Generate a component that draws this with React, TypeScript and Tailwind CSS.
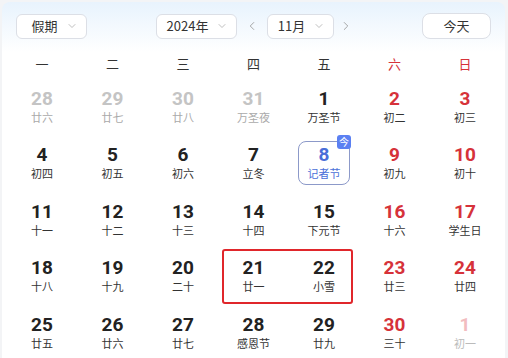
import { ChevronDown, ChevronLeft, ChevronRight } from "lucide-react";

type Day = { n: number; sub: string; muted?: boolean; red?: boolean; today?: boolean };

const weekdays = ["一", "二", "三", "四", "五", "六", "日"];

const rows: Day[][] = [
  [
    { n: 28, sub: "廿六", muted: true },
    { n: 29, sub: "廿七", muted: true },
    { n: 30, sub: "廿八", muted: true },
    { n: 31, sub: "万圣夜", muted: true },
    { n: 1, sub: "万圣节" },
    { n: 2, sub: "初二", red: true },
    { n: 3, sub: "初三", red: true },
  ],
  [
    { n: 4, sub: "初四" },
    { n: 5, sub: "初五" },
    { n: 6, sub: "初六" },
    { n: 7, sub: "立冬" },
    { n: 8, sub: "记者节", today: true },
    { n: 9, sub: "初九", red: true },
    { n: 10, sub: "初十", red: true },
  ],
  [
    { n: 11, sub: "十一" },
    { n: 12, sub: "十二" },
    { n: 13, sub: "十三" },
    { n: 14, sub: "十四" },
    { n: 15, sub: "下元节" },
    { n: 16, sub: "十六", red: true },
    { n: 17, sub: "学生日", red: true },
  ],
  [
    { n: 18, sub: "十八" },
    { n: 19, sub: "十九" },
    { n: 20, sub: "二十" },
    { n: 21, sub: "廿一" },
    { n: 22, sub: "小雪" },
    { n: 23, sub: "廿三", red: true },
    { n: 24, sub: "廿四", red: true },
  ],
  [
    { n: 25, sub: "廿五" },
    { n: 26, sub: "廿六" },
    { n: 27, sub: "廿七" },
    { n: 28, sub: "感恩节" },
    { n: 29, sub: "廿九" },
    { n: 30, sub: "三十", red: true },
    { n: 1, sub: "初一", red: true, muted: true },
  ],
];

function Select({ label, width, textPad }: { label: string; width: string; textPad: string }) {
  return (
    <div className={`flex items-center h-[25px] ${width} ${textPad} bg-white border border-[#dcdfe6] rounded-md text-[13px] text-[#333]`}>
      <span className="flex-1 text-center">{label}</span>
      <ChevronDown className="h-3 w-3 text-[#aaa] mr-[8px]" strokeWidth={1.5} />
    </div>
  );
}

function Cell({ d }: { d: Day }) {
  let numColor = "text-[#222]";
  let subColor = "text-[#333]";
  if (d.muted && d.red) {
    numColor = "text-[#f2bcc0]";
    subColor = "text-[#bbb]";
  } else if (d.muted) {
    numColor = "text-[#c4c4c4]";
    subColor = "text-[#aaa]";
  } else if (d.red) {
    numColor = "text-[#d6323a]";
  }
  if (d.today) {
    return (
      <div className="h-[56.5px] flex items-center justify-center">
        <div className="relative w-[52px] h-[44px] border-[1.5px] border-[#8c99c9] rounded-lg flex flex-col items-center justify-center">
          <span className="text-[19px] leading-[19px] font-bold text-[#4a6fd8] font-['Roboto',sans-serif]">{d.n}</span>
          <span className="mt-[2px] text-[11px] leading-[14px] text-[#4a6fd8]">{d.sub}</span>
          <span className="absolute -top-[7px] -right-[2px] w-[14px] h-[14px] rounded-[3px] bg-[#5b80f2] text-white text-[10px] leading-[14px] text-center">今</span>
        </div>
      </div>
    );
  }
  return (
    <div className="h-[56.5px] flex flex-col items-center justify-center">
      <span className={`text-[19px] leading-[19px] font-bold font-['Roboto',sans-serif] ${numColor}`}>{d.n}</span>
      <span className={`mt-[2px] text-[11px] leading-[14px] ${subColor}`}>{d.sub}</span>
    </div>
  );
}

export default function App() {
  return (
    <div className="w-[508px] h-[358px] bg-[#f3f4f6] pt-[2px] pl-[2px] pr-[3px] overflow-hidden font-['Noto_Sans_CJK_SC',sans-serif]">
      <div className="h-[360px] rounded-t-lg bg-gradient-to-b from-[#e8f3fd] via-white via-[14%] to-white">
        {/* Header */}
        <div className="flex items-center pt-[11px] pl-[14px] pr-[14px]">
          <Select label="假期" width="w-[71px]" textPad="pl-[6px]" />
          <div className="ml-[69px]">
            <Select label="2024年" width="w-[81px]" textPad="pl-[2px]" />
          </div>
          <ChevronLeft className="ml-[8px] h-[14px] w-[14px] text-[#999]" strokeWidth={1.5} />
          <div className="ml-[8px]">
            <Select label="11月" width="w-[67px]" textPad="pl-[2px]" />
          </div>
          <ChevronRight className="ml-[5px] h-[14px] w-[14px] text-[#999]" strokeWidth={1.5} />
          <button className="ml-auto h-[26px] w-[69px] bg-white border border-[#dcdfe6] rounded-lg text-[13px] text-[#333]">今天</button>
        </div>

        <div className="px-[4.75px]">
          {/* Weekdays */}
          <div className="grid grid-cols-7 mt-[11px] h-[27px] items-center">
            {weekdays.map((w, i) => (
              <div key={w} className={`text-center text-[13px] ${i >= 5 ? "text-[#d6323a]" : "text-[#333]"}`}>{w}</div>
            ))}
          </div>

          {/* Days */}
          <div className="relative mt-[1px]">
            {rows.map((r, ri) => (
              <div key={ri} className="grid grid-cols-7">
                {r.map((d, di) => (
                  <Cell key={di} d={d} />
                ))}
              </div>
            ))}
            <div className="absolute left-[215px] top-[171px] w-[131px] h-[55px] border-2 border-[#e0262b] rounded-[3px]" />
          </div>
        </div>
      </div>
    </div>
  );
}
